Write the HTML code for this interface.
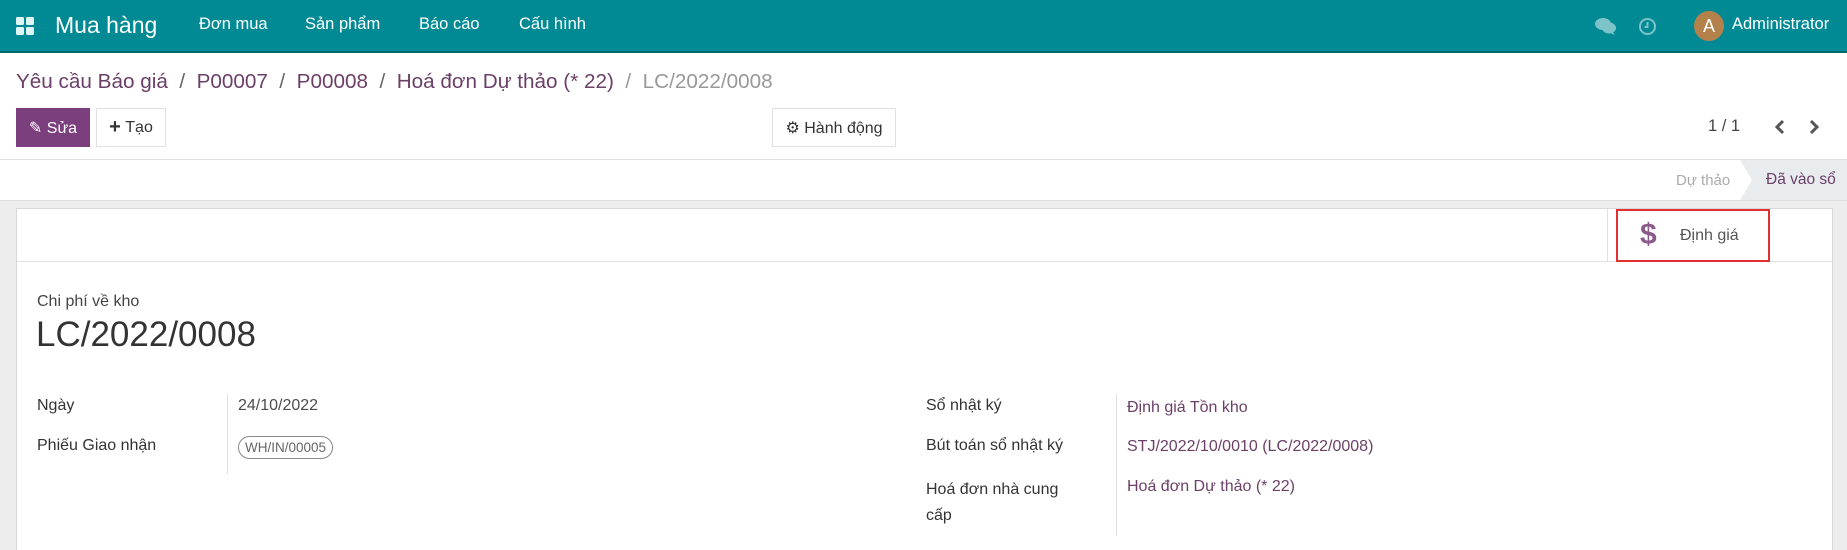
<!DOCTYPE html>
<html style="height:550px;overflow:hidden"><head><meta charset="utf-8"><style>
*{box-sizing:border-box;margin:0;padding:0}
body{width:1847px;height:550px;overflow:hidden;font-family:"Liberation Sans","Noto Sans CJK SC",sans-serif;background:#fff;color:#4c4c4c;position:relative}
.abs{position:absolute;white-space:nowrap}
.nav{position:absolute;left:0;top:0;width:1847px;height:53px;background:#018a94;border-bottom:2px solid #01686f}
.nav .m{color:#fff;font-size:16.5px;top:15px}
.crumb{top:70px;font-size:20.7px;color:#6b3f68}
.btn{position:absolute;top:108px;height:39px;border:1px solid #dee2e6;background:#fff;font-size:16px;color:#333;display:flex;align-items:center;justify-content:center}
.lbl{font-size:16px;color:#333}
.val{font-size:16px;color:#4c4c4c}
.lnk{font-size:16px;color:#6b3f68}
</style></head><body>
<div class="nav">
 <svg class="abs" style="left:16px;top:17px" width="19" height="19" viewBox="0 0 19 19"><rect x="0" y="0" width="8" height="8" rx="1.5" fill="#dff6f6"/><rect x="10" y="0" width="8" height="8" rx="1.5" fill="#dff6f6"/><rect x="0" y="10" width="8" height="8" rx="1.5" fill="#dff6f6"/><rect x="10" y="10" width="8" height="8" rx="1.5" fill="#dff6f6"/></svg>
 <div class="abs" style="left:55px;top:12px;font-size:23px;color:#fff">Mua hàng</div>
 <div class="abs m" style="left:199px">Đơn mua</div>
 <div class="abs m" style="left:305px">Sản phẩm</div>
 <div class="abs m" style="left:419px">Báo cáo</div>
 <div class="abs m" style="left:519px">Cấu hình</div>
 <svg class="abs" style="left:1595px;top:17px" width="22" height="19" viewBox="0 0 22 19"><ellipse cx="8" cy="7" rx="8" ry="6" fill="#7cc4c8"/><ellipse cx="14" cy="11" rx="7" ry="5.5" fill="#7cc4c8"/><path d="M17 14 L20 18 L13 15Z" fill="#7cc4c8"/></svg>
 <svg class="abs" style="left:1638px;top:17px" width="19" height="19" viewBox="0 0 19 19"><circle cx="9.5" cy="9.5" r="7.5" fill="none" stroke="#7cc4c8" stroke-width="2"/><path d="M9.5 5v5h-3" fill="none" stroke="#7cc4c8" stroke-width="2"/></svg>
 <div class="abs" style="left:1694px;top:11px;width:30px;height:30px;border-radius:50%;background:#b5814a;color:#fff;font-size:18px;text-align:center;line-height:30px">A</div>
 <div class="abs" style="left:1732px;top:15px;font-size:16.5px;color:#fff">Administrator</div>
</div>
<div class="abs crumb" style="left:16px">Yêu cầu Báo giá <span style="color:#666">&nbsp;/&nbsp;</span> P00007 <span style="color:#666">&nbsp;/&nbsp;</span> P00008 <span style="color:#666">&nbsp;/&nbsp;</span> Hoá đơn Dự thảo (* 22) <span style="color:#999">&nbsp;/&nbsp; LC/2022/0008</span></div>
<div class="btn" style="left:16px;width:74px;background:#7c3f7e;border-color:#7c3f7e;color:#fff">✎&nbsp;Sửa</div>
<div class="btn" style="left:96px;width:70px"><b style="font-size:20px">+</b>&nbsp;Tạo</div>
<div class="btn" style="left:772px;width:124px">⚙&nbsp;Hành động</div>
<div class="abs" style="left:1708px;top:117px;font-size:16.5px;color:#444">1 / 1</div>
<svg class="abs" style="left:1773px;top:119px" width="14" height="16" viewBox="0 0 14 16"><path d="M10 2L4 8l6 6" fill="none" stroke="#555" stroke-width="3"/></svg>
<svg class="abs" style="left:1807px;top:119px" width="14" height="16" viewBox="0 0 14 16"><path d="M4 2l6 6-6 6" fill="none" stroke="#555" stroke-width="3"/></svg>
<div class="abs" style="left:0;top:159px;width:1847px;height:1px;background:#dee2e6"></div>
<div class="abs" style="left:1676px;top:172px;font-size:15px;color:#aaa">Dự thảo</div>
<svg class="abs" style="left:1740px;top:160px" width="107" height="40"><path d="M0 0H107V40H0L12 20Z" fill="#e9ecef"/></svg>
<div class="abs" style="left:1766px;top:171px;font-size:15.5px;color:#6b3f68">Đã vào sổ</div>
<div class="abs" style="left:0;top:200px;width:1847px;height:350px;background:#ededed;border-top:1px solid #ddd"></div>
<div class="abs" style="left:16px;top:208px;width:1817px;height:342px;background:#fff;border:1px solid #d8d8d8;border-bottom:none"></div>
<div class="abs" style="left:17px;top:261px;width:1815px;height:1px;background:#dee2e6"></div>
<div class="abs" style="left:1607px;top:209px;width:1px;height:52px;background:#dee2e6"></div>
<div class="abs" style="left:1616px;top:209px;width:154px;height:53px;border:2px solid #e03030"></div>
<div class="abs" style="left:1640px;top:218px;font-size:30px;font-weight:bold;color:#8a5b8a">$</div>
<div class="abs" style="left:1680px;top:227px;font-size:16px;color:#555">Định giá</div>
<div class="abs" style="left:37px;top:293px;font-size:16px;color:#444">Chi phí về kho</div>
<div class="abs" style="left:36px;top:315px;font-size:35px;color:#333">LC/2022/0008</div>
<div class="abs" style="left:227px;top:394px;width:1px;height:80px;background:#dee2e6"></div>
<div class="abs" style="left:1116px;top:394px;width:1px;height:142px;background:#dee2e6"></div>
<div class="abs lbl" style="left:37px;top:397px">Ngày</div>
<div class="abs val" style="left:238px;top:397px">24/10/2022</div>
<div class="abs lbl" style="left:37px;top:437px">Phiếu Giao nhận</div>
<div class="abs" style="left:238px;top:436px;height:23px;padding:0 6px;border:1px solid #888;border-radius:12px;font-size:13.5px;line-height:21px;color:#666">WH/IN/00005</div>
<div class="abs lbl" style="left:926px;top:397px">Sổ nhật ký</div>
<div class="abs lnk" style="left:1127px;top:399px">Định giá Tồn kho</div>
<div class="abs lbl" style="left:926px;top:437px">Bút toán sổ nhật ký</div>
<div class="abs lnk" style="left:1127px;top:438px">STJ/2022/10/0010 (LC/2022/0008)</div>
<div class="abs lbl" style="left:926px;top:477px;line-height:26px;white-space:normal;width:150px">Hoá đơn nhà cung cấp</div>
<div class="abs lnk" style="left:1127px;top:478px">Hoá đơn Dự thảo (* 22)</div>
</body></html>
